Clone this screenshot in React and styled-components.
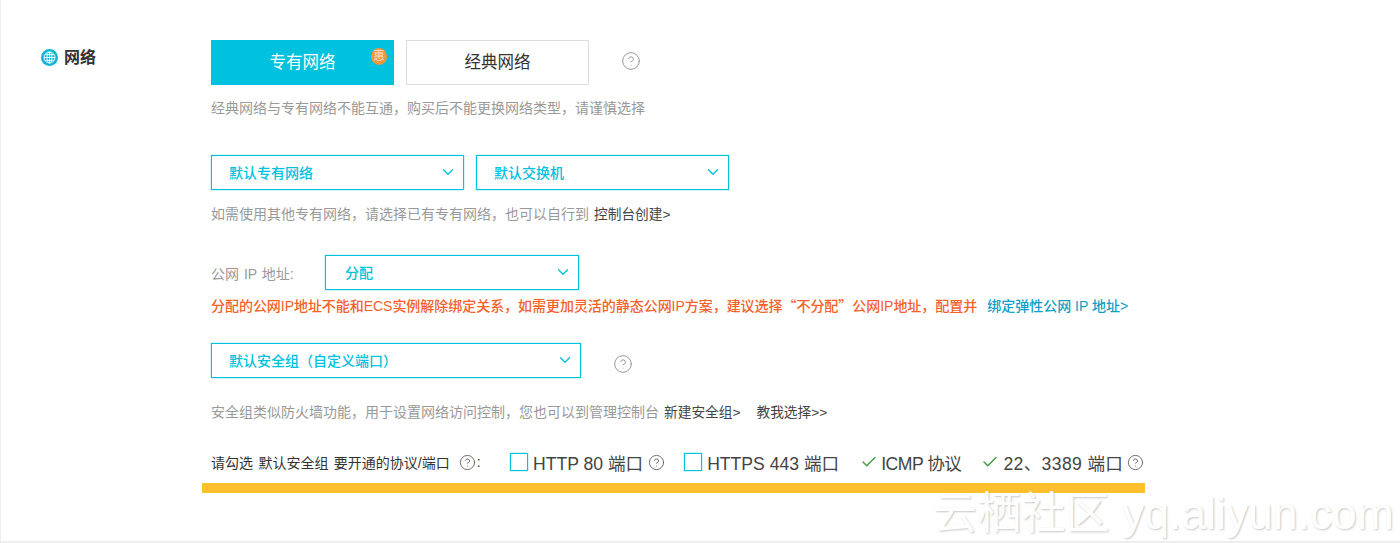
import React from 'react';
import styled, { createGlobalStyle } from 'styled-components';
import { ChevronDown, CircleHelp, Check } from 'lucide-react';

const GlobalStyle = createGlobalStyle`
  html, body {
    margin: 0;
    padding: 0;
    background: white;
  }
  body {
    font-family: "Liberation Sans", "Noto Sans CJK SC", sans-serif;
    color: #333;
  }
`;

const Page = styled.div`
  position: relative;
  box-sizing: border-box;
  width: 1400px;
  height: 543px;
  overflow: hidden;
  display: flex;
  padding: 40px 0 0 40px;
  border-left: 1px solid #eee;
  border-bottom: 2px solid #eee;
`;

const SectionTitle = styled.div`
  width: 170px;
  flex-shrink: 0;
  display: flex;
  align-items: center;
  align-self: flex-start;
  gap: 6px;
  height: 34px;
  font-size: 16px;
  font-weight: 700;
  color: #333;
`;

const TitleText = styled.span`
  padding-bottom: 2px;
`;

const Content = styled.div`
  display: flex;
  flex-direction: column;
  align-items: flex-start;
`;

const Row = styled.div`
  display: flex;
  align-items: center;
  gap: ${(p) => p.$gap ?? 12}px;
  margin-top: ${(p) => p.$top || 0}px;
`;

const Tab = styled.div`
  position: relative;
  box-sizing: border-box;
  width: 183px;
  height: 45px;
  display: flex;
  align-items: center;
  justify-content: center;
  padding-bottom: 3px;
  font-size: 16.5px;
  background: ${(p) => (p.$active ? '#00c1de' : 'white')};
  color: ${(p) => (p.$active ? 'white' : '#333')};
  border: 1px solid ${(p) => (p.$active ? '#00c1de' : '#ddd')};
`;

const Badge = styled.span`
  position: absolute;
  top: 7px;
  right: 6px;
  width: 16px;
  height: 17px;
  border-radius: 50%;
  background: #f0963c;
  color: #ffe2c4;
  font-size: 11px;
  line-height: 16px;
  text-align: center;
`;

const Help = styled(CircleHelp)`
  color: ${(p) => p.$color || '#999'};
  flex-shrink: 0;
  margin: ${(p) => p.$top || 0}px 0 ${(p) => p.$bottom || 0}px ${(p) => p.$left || 0}px;
`;

const Hint = styled.div`
  height: 20px;
  line-height: 20px;
  font-size: 14px;
  color: #999;
  white-space: pre;
  margin-top: ${(p) => p.$top || 0}px;
`;

const DarkLink = styled.span`
  color: #444;
  font-size: 13.7px;
  margin-left: ${(p) => p.$left || 0}px;
`;

const Select = styled.div`
  box-sizing: border-box;
  width: ${(p) => p.$width}px;
  height: 35px;
  display: flex;
  align-items: center;
  justify-content: space-between;
  padding: 0 6px 2px ${(p) => p.$pad || 17}px;
  border: 1px solid #00c1de;
  box-shadow: 0 0 1px #00c1de;
  color: #00c1de;
  font-size: 14px;
  font-weight: 500;
`;

const FieldLabel = styled.span`
  width: 114px;
  font-size: 14px;
  color: #999;
  word-spacing: 1px;
`;

const Warning = styled.div`
  height: 20px;
  line-height: 20px;
  margin-top: 5px;
  font-size: 14px;
  font-weight: 500;
  letter-spacing: -0.04px;
  color: #f4612a;
  white-space: pre;
`;

const Quote = styled.span`
  font-family: "Noto Sans CJK SC", sans-serif;
`;

const BlueLink = styled.span`
  color: #0e9fc4;
  margin-left: 10px;
  letter-spacing: 0;
`;

const ProtocolRow = styled.div`
  display: flex;
  align-items: center;
  height: 30px;
  margin-top: 25px;
`;

const ProtocolLabel = styled.span`
  width: 299px;
  display: flex;
  align-items: center;
  gap: 1px;
  font-size: 14px;
  word-spacing: 1.5px;
  color: #333;
  white-space: pre;
`;

const Protocol = styled.span`
  display: flex;
  align-items: center;
  gap: ${(p) => p.$gap || 5}px;
  margin-right: ${(p) => p.$right || 0}px;
  font-size: 17.6px;
  letter-spacing: ${(p) => p.$spacing || 0}px;
  color: #444;
  white-space: pre;
`;

const CheckBox = styled.span`
  box-sizing: border-box;
  width: 18px;
  height: 18px;
  border: 1px solid #00c1de;
  box-shadow: 0 0 1px #00c1de;
  flex-shrink: 0;
`;

const Tick = styled(Check)`
  color: #3c9a3c;
  flex-shrink: 0;
`;

const YellowBar = styled.div`
  width: 943px;
  height: 10px;
  margin: 6px 0 0 -9px;
  background: #fdbf2d;
`;

const Watermark = styled.div`
  position: absolute;
  left: 932px;
  top: 486px;
  font-size: 44px;
  line-height: 56px;
  letter-spacing: 0.2px;
  color: white;
  white-space: pre;
  text-shadow: 1px 1px 2px rgba(0, 0, 0, 0.22);
`;

const Globe = () => (
  <svg width="17" height="17" viewBox="0 0 17 17" fill="none">
    <circle cx="8.5" cy="8.5" r="8.5" fill="#10b3d6" />
    <g stroke="white" strokeWidth="0.9">
      <circle cx="8.5" cy="8.5" r="5.5" />
      <ellipse cx="8.5" cy="8.5" rx="2.5" ry="5.5" />
      <path d="M8.5 3v11M3 8.5h11M3.9 5.7h9.2M3.9 11.3h9.2" />
    </g>
  </svg>
);

const Chevron = () => <ChevronDown size={18} strokeWidth={1.7} />;

const App = () => {
  return (
    <Page>
      <GlobalStyle />
      <SectionTitle>
        <Globe />
        <TitleText>网络</TitleText>
      </SectionTitle>
      <Content>
        <Row>
          <Tab $active>
            专有网络
            <Badge>惠</Badge>
          </Tab>
          <Tab>经典网络</Tab>
          <Help size={20} strokeWidth={1.2} $left={20} $bottom={3} />
        </Row>
        <Hint $top={13}>经典网络与专有网络不能互通，购买后不能更换网络类型，请谨慎选择</Hint>

        <Row $top={37}>
          <Select $width={253}>
            默认专有网络
            <Chevron />
          </Select>
          <Select $width={253}>
            默认交换机
            <Chevron />
          </Select>
        </Row>
        <Hint $top={14}>
          如需使用其他专有网络，请选择已有专有网络，也可以自行到<DarkLink $left={5}>控制台创建&gt;</DarkLink>
        </Hint>

        <Row $top={31} $gap={0}>
          <FieldLabel>公网 IP 地址:</FieldLabel>
          <Select $width={254} $pad={19}>
            分配
            <Chevron />
          </Select>
        </Row>
        <Warning>
          分配的公网IP地址不能和ECS实例解除绑定关系，如需更加灵活的静态公网IP方案，建议选择<Quote>“</Quote>不分配<Quote>”</Quote>公网IP地址，配置并<BlueLink>绑定弹性公网 IP 地址&gt;</BlueLink>
        </Warning>

        <Row $top={28} $gap={32}>
          <Select $width={370}>
            默认安全组（自定义端口）
            <Chevron />
          </Select>
          <Help size={20} strokeWidth={1.2} $top={6} />
        </Row>
        <Hint $top={24}>
          安全组类似防火墙功能，用于设置网络访问控制，您也可以到管理控制台<DarkLink $left={5}>新建安全组&gt;</DarkLink>
          <DarkLink $left={16}>教我选择&gt;&gt;</DarkLink>
        </Hint>

        <ProtocolRow>
          <ProtocolLabel>
            请勾选 默认安全组 要开通的协议/端口
            <Help size={17} strokeWidth={1.2} $color="#555" $left={8} />
            <span>:</span>
          </ProtocolLabel>
          <Protocol $right={19}>
            <CheckBox />
            HTTP 80 端口
            <Help size={17} strokeWidth={1.2} $color="#555" />
          </Protocol>
          <Protocol $right={21}>
            <CheckBox />
            HTTPS 443 端口
          </Protocol>
          <Protocol $right={20} $gap={3} $spacing={-0.5}>
            <Tick size={18} strokeWidth={1.8} />
            ICMP 协议
          </Protocol>
          <Protocol $gap={4} $spacing={0.35}>
            <Tick size={18} strokeWidth={1.8} />
            22、3389 端口
            <Help size={17} strokeWidth={1.2} $color="#555" />
          </Protocol>
        </ProtocolRow>
        <YellowBar />
      </Content>
      <Watermark>云栖社区 yq.aliyun.com</Watermark>
    </Page>
  );
};

export default App;
